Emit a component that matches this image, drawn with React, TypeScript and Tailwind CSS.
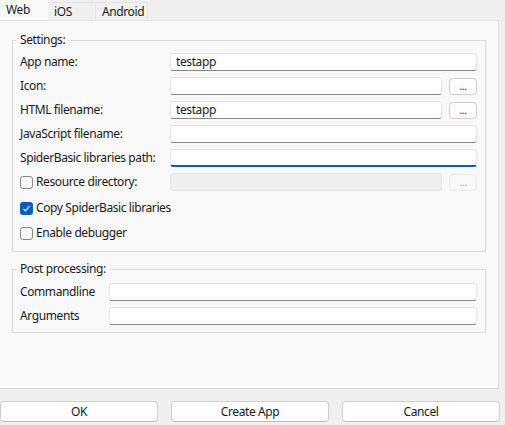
import React from 'react';

const font = { fontFamily: '"Segoe UI", "Noto Sans", "Open Sans", sans-serif' };

const TextInput: React.FC<{ value?: string; focused?: boolean; disabled?: boolean; className?: string }> = ({
  value = '',
  focused,
  disabled,
  className = '',
}) => {
  if (disabled) {
    return <div className={`h-[18px] rounded-[3px] border border-[#e5e5e5] bg-[#f0f0f0] ${className}`} />;
  }
  return (
    <div
      className={`flex h-[18px] items-center rounded-[3px] border border-[#e5e5e5] bg-white px-[5px] text-[12px] leading-none text-[#1a1a1a] ${
        focused ? 'border-b-2 border-b-[#005fb8]' : 'border-b-[#868686]'
      } ${className}`}
    >
      {value}
    </div>
  );
};

const DotsButton: React.FC<{ disabled?: boolean }> = ({ disabled }) => (
  <div
    className={`ml-[7px] flex h-[17px] w-[28px] items-end justify-center rounded-[4px] border pb-[3px] text-[10px] leading-none ${
      disabled ? 'border-[#ebebeb] bg-[#f9f9f9] text-[#a0a0a0]' : 'border-[#d0d0d0] bg-[#fdfdfd] text-[#1a1a1a]'
    }`}
  >
    ...
  </div>
);

const Checkbox: React.FC<{ checked?: boolean; label: string }> = ({ checked, label }) => (
  <div className="flex items-center">
    {checked ? (
      <div className="flex h-[13px] w-[13px] items-center justify-center rounded-[3px] bg-[#005fb8]">
        <svg width="9" height="9" viewBox="0 0 9 9" fill="none">
          <path d="M1.5 4.8 L3.5 6.8 L7.6 2.2" stroke="white" strokeWidth="1.2" />
        </svg>
      </div>
    ) : (
      <div className="h-[13px] w-[13px] rounded-[3px] border border-[#8a8a8a] bg-[#f6f6f6]" />
    )}
    <span className="ml-[3px] text-[12px] text-[#1a1a1a]">{label}</span>
  </div>
);

const Row: React.FC<{ label: string; labelWidth: string; children: React.ReactNode }> = ({
  label,
  labelWidth,
  children,
}) => (
  <div className="flex h-[18px] items-center">
    <span className={`${labelWidth} shrink-0 text-[12px] text-[#1a1a1a]`}>{label}</span>
    <div className="flex flex-1 items-center">{children}</div>
  </div>
);

const Group: React.FC<{ title: string; className?: string; children: React.ReactNode }> = ({
  title,
  className = '',
  children,
}) => (
  <fieldset className={`mx-[12px] w-[474px] border border-[#dcdcdc] ${className}`}>
    <legend className="ml-[3px] px-[4px] text-[12px] leading-[16px] text-[#1a1a1a]">{title}</legend>
    {children}
  </fieldset>
);

const App: React.FC = () => {
  return (
    <div
      className="flex h-[425px] w-[505px] flex-col overflow-hidden bg-[#f0f0f0] tracking-[-0.4px]"
      style={font}
    >
      {/* Tabs */}
      <div className="flex h-[20px] items-end">
        <div className="flex h-[20px] w-[48px] items-center bg-[#f9f9f9] pl-[6px] text-[12px] text-[#1a1a1a]">Web</div>
        <div className="flex h-[18px] w-[48px] items-center border-t border-r border-[#e5e5e5] pl-[6px] text-[12px] text-[#1a1a1a]">
          iOS
        </div>
        <div className="flex h-[18px] w-[52px] items-center border-t border-r border-[#e5e5e5] pl-[6px] text-[12px] text-[#1a1a1a]">
          Android
        </div>
      </div>

      {/* Panel */}
      <div className="-ml-px h-[369px] w-[500px] border border-[#dcdcdc] border-t-[#e5e5e5] bg-[#f9f9f9]">
        <Group title="Settings:" className="mt-[11px]">
          <div className="flex flex-col gap-[6px] pt-[5px] pb-[9px] pl-[7px] pr-[8px]">
            <Row label="App name:" labelWidth="w-[150px]">
              <TextInput value="testapp" className="flex-1" />
            </Row>
            <Row label="Icon:" labelWidth="w-[150px]">
              <TextInput className="flex-1" />
              <DotsButton />
            </Row>
            <Row label="HTML filename:" labelWidth="w-[150px]">
              <TextInput value="testapp" className="flex-1" />
              <DotsButton />
            </Row>
            <Row label="JavaScript filename:" labelWidth="w-[150px]">
              <TextInput className="flex-1" />
            </Row>
            <Row label="SpiderBasic libraries path:" labelWidth="w-[150px]">
              <TextInput focused className="flex-1" />
            </Row>
            <div className="flex h-[18px] items-center">
              <div className="w-[150px] shrink-0">
                <Checkbox label="Resource directory:" />
              </div>
              <div className="flex flex-1 items-center">
                <TextInput disabled className="flex-1" />
                <DotsButton disabled />
              </div>
            </div>
            <div className="mt-[2px] flex h-[18px] items-center">
              <Checkbox checked label="Copy SpiderBasic libraries" />
            </div>
            <div className="mt-[1px] flex h-[18px] items-center">
              <Checkbox label="Enable debugger" />
            </div>
          </div>
        </Group>

        <Group title="Post processing:" className="mt-[9px]">
          <div className="flex flex-col gap-[6px] pt-[6px] pb-[7px] pl-[7px] pr-[8px]">
            <Row label="Commandline" labelWidth="w-[89px]">
              <TextInput className="flex-1" />
            </Row>
            <Row label="Arguments" labelWidth="w-[89px]">
              <TextInput className="flex-1" />
            </Row>
          </div>
        </Group>
      </div>

      {/* Buttons */}
      <div className="mt-[12px] flex gap-[13px]">
        {['OK', 'Create App', 'Cancel'].map((b) => (
          <div
            key={b}
            className="flex h-[21px] w-[158px] items-center justify-center rounded-[4px] border border-[#d0d0d0] border-b-[#bcbcbc] bg-[#fdfdfd] text-[12px] text-[#1a1a1a]"
          >
            {b}
          </div>
        ))}
      </div>
    </div>
  );
};

export default App;
